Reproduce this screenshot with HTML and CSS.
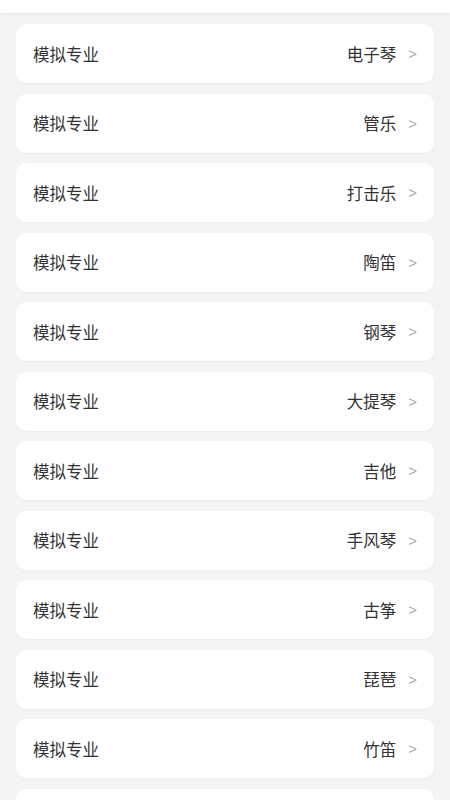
FILE: index.html
```html
<!DOCTYPE html>
<html lang="zh-CN">
<head>
    <meta charset="UTF-8">
    <meta name="viewport" content="width=device-width, initial-scale=1.0">
    <title>模拟专业</title>
    <link rel="stylesheet" href="styles.css">
</head>
<body>
    <div class="topbar"></div>

    <div class="list">
        <div class="item"><span class="label">模拟专业</span><span class="value">电子琴</span><span class="arrow">&gt;</span></div>
        <div class="item"><span class="label">模拟专业</span><span class="value">管乐</span><span class="arrow">&gt;</span></div>
        <div class="item"><span class="label">模拟专业</span><span class="value">打击乐</span><span class="arrow">&gt;</span></div>
        <div class="item"><span class="label">模拟专业</span><span class="value">陶笛</span><span class="arrow">&gt;</span></div>
        <div class="item"><span class="label">模拟专业</span><span class="value">钢琴</span><span class="arrow">&gt;</span></div>
        <div class="item"><span class="label">模拟专业</span><span class="value">大提琴</span><span class="arrow">&gt;</span></div>
        <div class="item"><span class="label">模拟专业</span><span class="value">吉他</span><span class="arrow">&gt;</span></div>
        <div class="item"><span class="label">模拟专业</span><span class="value">手风琴</span><span class="arrow">&gt;</span></div>
        <div class="item"><span class="label">模拟专业</span><span class="value">古筝</span><span class="arrow">&gt;</span></div>
        <div class="item"><span class="label">模拟专业</span><span class="value">琵琶</span><span class="arrow">&gt;</span></div>
        <div class="item"><span class="label">模拟专业</span><span class="value">竹笛</span><span class="arrow">&gt;</span></div>
        <div class="item"></div>
    </div>
</body>
</html>
```

FILE: styles.css
```css
body {
    margin: 0;
    background-color: #f4f4f4;
    font-family: "Noto Sans CJK SC", "Noto Sans", sans-serif;
    color: #333;
}
.topbar {
    height: 13px;
    background-color: #fff;
    box-shadow: 0 1px 4px rgba(0,0,0,0.06);
}
.list {
    padding: 11px 16px 0 16px;
    display: flex;
    flex-direction: column;
    gap: 10.5px;
}
.item {
    height: 59px;
    display: flex;
    align-items: center;
    padding: 0 17px;
    background-color: #fff;
    border-radius: 10px;
    box-shadow: 0 1px 3px rgba(0,0,0,0.04);
    font-size: 16.5px;
}
.label {
    flex: 1;
}
.value {
    color: #333;
}
.arrow {
    margin-left: 12px;
    color: #aaa;
    font-family: "Liberation Sans", sans-serif;
    font-size: 15px;
}
```
